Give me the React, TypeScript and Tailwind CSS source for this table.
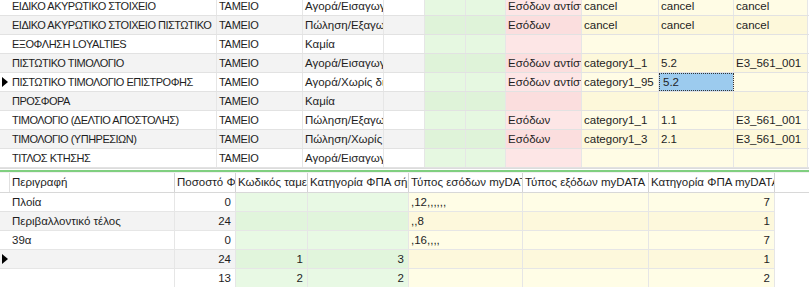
import React from "react";

const topWidths = ["w-[207px]", "w-[86px]", "w-[81px]", "w-[41px]", "w-[41px]", "w-[40px]", "w-[76px]", "w-[77px]", "w-[75px]", "w-[74px]"];
const botWidths = ["w-[165px]", "w-[61px]", "w-[72px]", "w-[101px]", "w-[114px]", "w-[126px]", "w-[126px]"];

const topRows: string[][] = [
  ["ΕΙΔΙΚΟ ΑΚΥΡΩΤΙΚΟ ΣΤΟΙΧΕΙΟ", "ΤΑΜΕΙΟ", "Αγορά/Εισαγωγή", "", "", "", "Εσόδων αντίστροφης", "cancel", "cancel", "cancel"],
  ["ΕΙΔΙΚΟ ΑΚΥΡΩΤΙΚΟ ΣΤΟΙΧΕΙΟ ΠΙΣΤΩΤΙΚΟ", "ΤΑΜΕΙΟ", "Πώληση/Εξαγωγή", "", "", "", "Εσόδων", "cancel", "cancel", "cancel"],
  ["ΕΞΟΦΛΗΣΗ LOYALTIES", "ΤΑΜΕΙΟ", "Καμία", "", "", "", "", "", "", ""],
  ["ΠΙΣΤΩΤΙΚΟ ΤΙΜΟΛΟΓΙΟ", "ΤΑΜΕΙΟ", "Αγορά/Εισαγωγή", "", "", "", "Εσόδων αντίστροφης", "category1_1", "5.2", "E3_561_001"],
  ["ΠΙΣΤΩΤΙΚΟ ΤΙΜΟΛΟΓΙΟ ΕΠΙΣΤΡΟΦΗΣ", "ΤΑΜΕΙΟ", "Αγορά/Χωρίς διακίνηση", "", "", "", "Εσόδων αντίστροφης", "category1_95", "5.2", ""],
  ["ΠΡΟΣΦΟΡΑ", "ΤΑΜΕΙΟ", "Καμία", "", "", "", "", "", "", ""],
  ["ΤΙΜΟΛΟΓΙΟ (ΔΕΛΤΙΟ ΑΠΟΣΤΟΛΗΣ)", "ΤΑΜΕΙΟ", "Πώληση/Εξαγωγή", "", "", "", "Εσόδων", "category1_1", "1.1", "E3_561_001"],
  ["ΤΙΜΟΛΟΓΙΟ (ΥΠΗΡΕΣΙΩΝ)", "ΤΑΜΕΙΟ", "Πώληση/Χωρίς ΦΠΑ", "", "", "", "Εσόδων", "category1_3", "2.1", "E3_561_001"],
  ["ΤΙΤΛΟΣ ΚΤΗΣΗΣ", "ΤΑΜΕΙΟ", "Αγορά/Εισαγωγή", "", "", "", "", "", "", ""],
];

const botHead = ["Περιγραφή", "Ποσοστό ΦΠΑ", "Κωδικός ταμειακής", "Κατηγορία ΦΠΑ σήμανσης", "Τύπος εσόδων myDATA", "Τύπος εξόδων myDATA", "Κατηγορία ΦΠΑ myDATA"];

const botRows: string[][] = [
  ["Πλοία", "0", "", "", ",12,,,,,,", "", "7"],
  ["Περιβαλλοντικό τέλος", "24", "", "", ",,8", "", "1"],
  ["39α", "0", "", "", ",16,,,,", "", "7"],
  ["", "24", "1", "3", "", "", "1"],
  ["", "13", "2", "2", "", "", "2"],
];

function topBg(col: number, alt: boolean) {
  if (col === 4 || col === 5) return alt ? "bg-[#dff3d9]" : "bg-[#e6f8e1]";
  if (col === 6) return alt ? "bg-[#fbdede]" : "bg-[#fde6e6]";
  if (col >= 7) return alt ? "bg-[#fdf8da]" : "bg-[#fffce5]";
  return alt ? "bg-[#f3f3f3]" : "bg-white";
}

function botBg(col: number, alt: boolean) {
  if (col === 2 || col === 3) return alt ? "bg-[#e1f5dc]" : "bg-[#e8f9e4]";
  if (col >= 4) return alt ? "bg-[#fdf8dc]" : "bg-[#fffde6]";
  return alt ? "bg-[#f3f3f3]" : "bg-white";
}

const Arrow = () => (
  <svg width="6" height="10" viewBox="0 0 6 10" className="ml-[2px]">
    <polygon points="0,0 6,5 0,10" fill="#000" />
  </svg>
);

export default function App() {
  return (
    <div className="w-[809px] h-[287px] overflow-hidden bg-white text-[11.5px] text-[#1e1e1e] font-['Liberation_Sans',Arial,sans-serif]">
      <div className="h-[168px] overflow-hidden">
        <div className="-mt-[3px]">
          {topRows.map((row, r) => {
            const alt = r % 2 === 1;
            return (
              <div key={r} className="flex h-[19px] border-b border-[#e2e2e2]">
                <div className={`w-[10px] shrink-0 flex items-center ${alt ? "bg-[#f3f3f3]" : "bg-white"}`}>
                  {r === 4 && <Arrow />}
                </div>
                {row.map((t, c) => {
                  const sel = r === 4 && c === 8;
                  return (
                    <div
                      key={c}
                      className={`${topWidths[c]} shrink-0 overflow-hidden whitespace-nowrap border-r border-[#e6e6e6] leading-[18px] ${c === 0 ? "text-[11px] tracking-[-0.5px]" : c === 1 ? "text-[11px] tracking-[-0.3px]" : ""} ${sel ? "bg-[#9ccbee] outline-1 outline-dotted outline-[#333] -outline-offset-1 pl-[4px]" : `${topBg(c, alt)} pl-[2px]`}`}
                    >
                      {t}
                    </div>
                  );
                })}
              </div>
            );
          })}
        </div>
      </div>
      <div className="h-[1px] bg-[#dcdcdc]" />
      <div className="h-[1px] bg-white" />
      <div className="h-[2px] bg-[#80cf80]" />
      <div className="h-[1px] bg-[#f0f0f0]" />
      <div className="flex h-[20px] border-b border-[#d8d8d8] bg-white">
        <div className="w-[10px] shrink-0 border-r border-[#e0e0e0]" />
        {botHead.map((t, c) => (
          <div key={c} className={`${botWidths[c]} shrink-0 overflow-hidden whitespace-nowrap border-r border-[#d4d4d4] pl-[2px] leading-[19px]`}>
            {t}
          </div>
        ))}
      </div>
      {botRows.map((row, r) => {
        const alt = r % 2 === 1;
        return (
          <div key={r} className="flex h-[19px]">
            <div className={`w-[10px] shrink-0 flex items-center border-b border-[#e2e2e2] ${alt ? "bg-[#f3f3f3]" : "bg-white"}`}>
              {r === 3 && <Arrow />}
            </div>
            {row.map((t, c) => (
              <div
                key={c}
                className={`${botWidths[c]} shrink-0 overflow-hidden whitespace-nowrap border-r border-b border-[#e6e6e6] leading-[18px] ${botBg(c, alt)} ${c === 0 || c === 4 ? "pl-[2px]" : "text-right pr-[4px]"}`}
              >
                {t}
              </div>
            ))}
          </div>
        );
      })}
    </div>
  );
}
